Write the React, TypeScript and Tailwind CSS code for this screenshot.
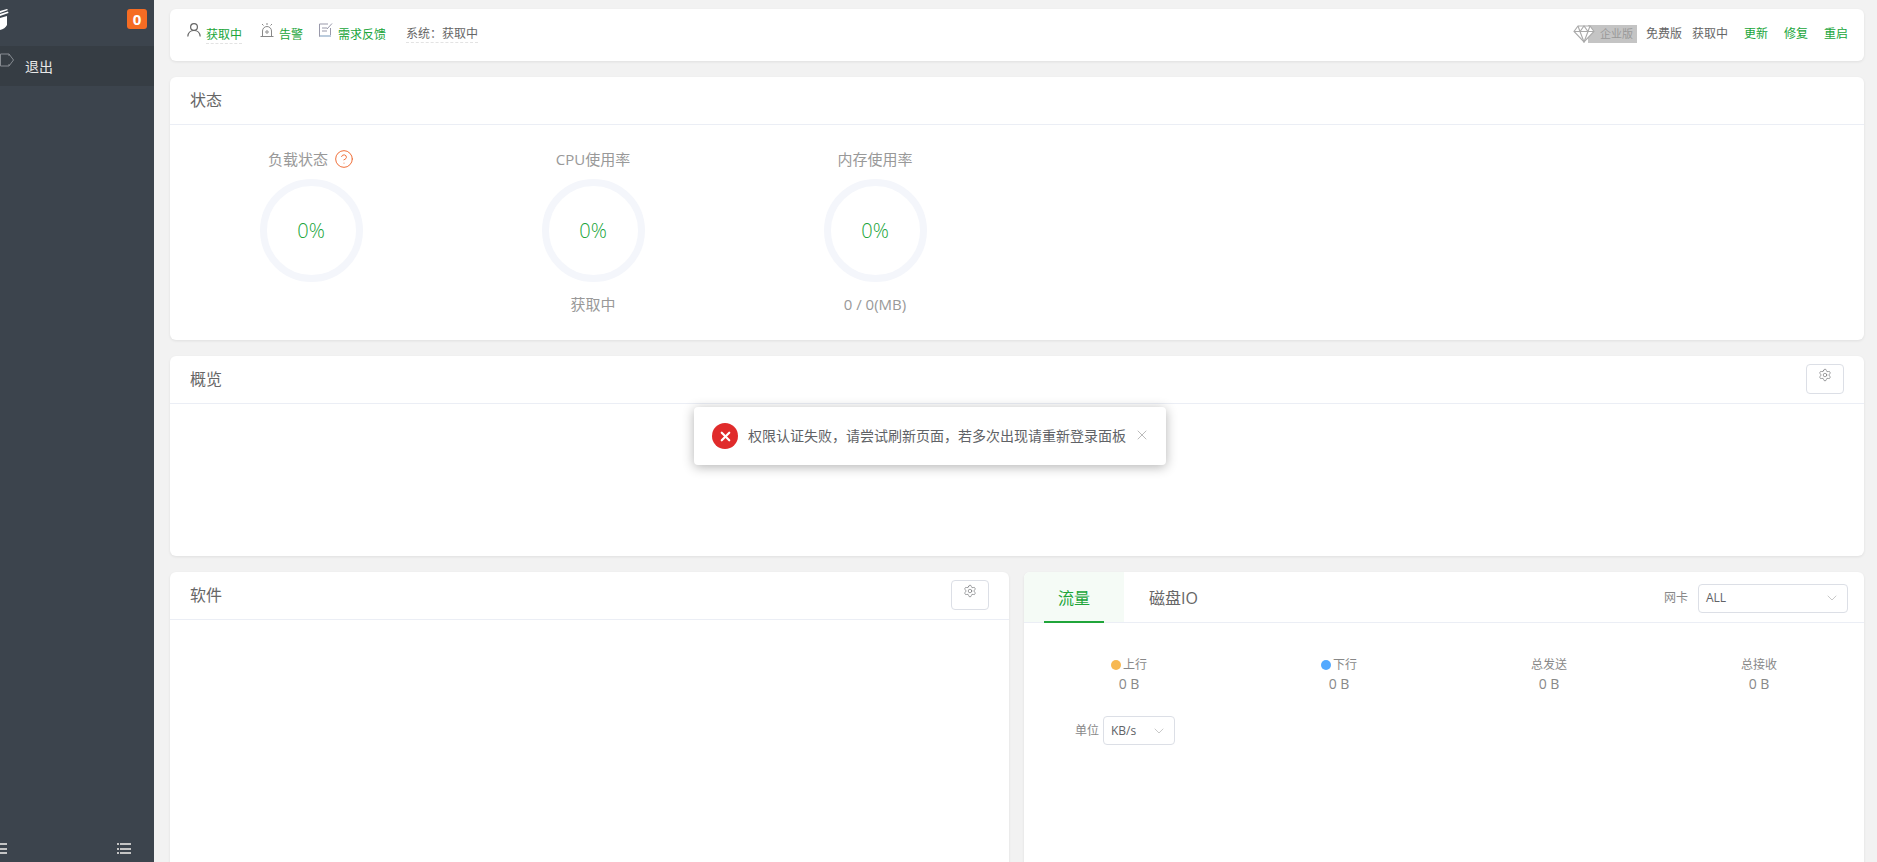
import { ChevronDown, CircleHelp, Settings, X } from 'lucide-react'

const font = "font-['Open_Sans','Noto_Sans_CJK_SC',sans-serif]"

function Card({ title, action, children }: { title: string; action?: React.ReactNode; children?: React.ReactNode }) {
  return (
    <div className="bg-white rounded-[6px] shadow-[0_1px_3px_rgba(0,0,0,0.08)]">
      <div className="h-[48px] border-b border-[#ebeef5] pl-5 pr-5 pb-[2px] flex items-center justify-between text-[16px] text-[#666]">
        <span>{title}</span>
        {action}
      </div>
      {children}
    </div>
  )
}

function GearButton({ className }: { className: string }) {
  return (
    <button className={`h-[30px] border border-[#dcdfe6] rounded-[4px] flex justify-center pt-[3px] text-[#606266] ${className}`}>
      <Settings size={14} strokeWidth={1} />
    </button>
  )
}

function Gauge({ title, foot, help }: { title: string; foot?: string; help?: boolean }) {
  return (
    <div className="w-[282px] flex flex-col items-center">
      <div className="h-[22px] flex items-center gap-[6px] text-[15px] text-[#999]">
        {title}
        {help && <CircleHelp size={20} strokeWidth={1.2} className="text-[#f0703a]" />}
      </div>
      <div className="mt-[9px] w-[103px] h-[103px] rounded-full border-[7px] border-[#f4f6fb] flex items-center justify-center text-[20px] font-[350] text-[#20a53a]">
        0%
      </div>
      <div className="mt-[12px] h-5 leading-5 text-[15px] text-[#999]">{foot}</div>
    </div>
  )
}

function Stat({ label, dot }: { label: string; dot?: string }) {
  return (
    <div className="w-[210px] flex flex-col items-center">
      <div className="h-[18px] flex items-center gap-[2px] text-[12px] text-[#888]">
        {dot && <span className={`w-[10px] h-[10px] rounded-full ${dot}`} />}
        {label}
      </div>
      <div className="mt-px h-[18px] leading-[18px] text-[14px] text-[#888]">0 B</div>
    </div>
  )
}

function Select({ value, className }: { value: string; className: string }) {
  return (
    <div className={`h-[29px] border border-[#dcdfe6] rounded-[4px] bg-white flex items-center justify-between pl-[7px] pr-[7px] text-[12px] text-[#606266] ${className}`}>
      {value}
      <ChevronDown size={16} strokeWidth={0.8} className="text-[#999]" />
    </div>
  )
}

function ListIcon({ className }: { className?: string }) {
  return (
    <svg width="14" height="12" viewBox="0 0 14 12" className={className} fill="#c4c4c4">
      <rect x="0" y="1" width="2" height="2" />
      <rect x="3" y="1" width="11" height="2" />
      <rect x="0" y="6" width="2" height="2" />
      <rect x="3" y="6" width="11" height="2" />
      <rect x="0" y="10" width="2" height="2" />
      <rect x="3" y="10" width="11" height="2" />
    </svg>
  )
}

export default function App() {
  return (
    <div className={`relative h-[862px] flex overflow-hidden bg-[#f2f2f2] ${font}`}>
      <aside className="w-[154px] shrink-0 bg-[#3c444d] flex flex-col">
        <div className="h-[46px] flex justify-between pt-[9px] pr-[7px]">
          <svg width="9" height="22" viewBox="0 0 9 22" fill="#fff">
            <path d="M0 2 L7 0 L8 1 L0 4 Z M0 5 L8 2.5 L8.5 4 L0 7 Z M0 9 L7 7 L7 16 Q5 20 0 21 Z" />
          </svg>
          <span className="w-5 h-5 rounded-[3px] bg-[#f56c23] text-white text-[15px] font-bold flex items-center justify-center">0</span>
        </div>
        <div className="h-10 bg-[#363d44] flex text-[14px] text-[#e8e8e8]">
          <svg width="14" height="14" viewBox="0 0 14 14" fill="none" stroke="#868b91" className="mt-[7px] shrink-0">
            <path d="M9 1 H0.5 V13 H9 M9 1 L13.5 7 L9 13 M9 1 V3 M9 11 V13" />
          </svg>
          <span className="ml-[11px] mt-[11px] leading-5">退出</span>
        </div>
        <div className="mt-auto pb-[8px] pr-[23px] flex justify-between">
          <ListIcon className="-ml-[7px]" />
          <ListIcon />
        </div>
      </aside>

      <main className="flex-1 pl-4 pr-[13px] pt-[9px] flex flex-col gap-4 min-w-0">
        <div className="h-[52px] shrink-0 bg-white rounded-[6px] shadow-[0_1px_3px_rgba(0,0,0,0.08)] pt-[17px] pl-[17px] pr-4 flex justify-between text-[12px] leading-[18px]">
          <div className="flex">
            <svg width="14" height="14" viewBox="0 0 14 14" fill="none" stroke="#666" strokeWidth="1.2" className="-mt-[3px]">
              <circle cx="7" cy="4" r="3.4" />
              <path d="M0.8 13.5 C1.2 9 4 7.5 7 7.5 S12.8 9 13.2 13.5" />
            </svg>
            <span className="ml-[5px] h-[18px] border-b border-dashed border-[#e3e3e3] text-[#20a53a]">获取中</span>
            <svg width="14" height="14" viewBox="0 0 14 14" fill="none" stroke="#888" className="-mt-[3px] ml-[18px]">
              <path d="M0.5 13.5 H13.5 M2.5 13.5 V8 A4.5 4.5 0 0 1 11.5 8 V13.5 M7 0 V2 M2 1 L3.5 2.5 M12 1 L10.5 2.5" />
              <circle cx="7" cy="9" r="1.2" />
            </svg>
            <span className="ml-[5px] text-[#20a53a]">告警</span>
            <svg width="14" height="14" viewBox="0 0 14 14" fill="none" stroke="#99a" className="-mt-[3px] ml-[16px]">
              <path d="M11.5 5 V13.5 H0.5 V1 H9 M3 5 H8 M3 8 H8 M8 6 L13 0.5" />
              <path d="M1 13 H12" stroke="#bcd" strokeWidth="2" />
            </svg>
            <span className="ml-[5px] text-[#20a53a]">需求反馈</span>
            <span className="ml-5 h-[18px] -mt-px border-b border-dashed border-[#e3e3e3] text-[#666]">系统：获取中</span>
          </div>
          <div className="flex -mt-[1px] text-[#666]">
            <div className="relative w-[64px] h-[18px] mr-[9px]">
              <span className="absolute right-0 top-0 w-[49px] h-[18px] bg-[#c4c4c4] text-[#999] text-[11px] pl-[12px]">企业版</span>
              <svg width="22" height="18" viewBox="0 0 22 18" fill="#fff" stroke="#aaa" strokeWidth="1.1" className="absolute left-0 top-0">
                <path d="M5 1 H17 L21 6.5 L11 17 L1 6.5 Z" />
                <path d="M1 6.5 H21 M7 6.5 L11 17 L15 6.5 M5 1 L7 6.5 L11 1 L15 6.5 L17 1" fill="none" />
              </svg>
            </div>
            <span>免费版</span>
            <span className="ml-[10px]">获取中</span>
            <span className="ml-4 text-[#20a53a]">更新</span>
            <span className="ml-4 text-[#20a53a]">修复</span>
            <span className="ml-4 text-[#20a53a]">重启</span>
          </div>
        </div>

        <Card title="状态">
          <div className="pt-[23px] pb-[26px] flex">
            <Gauge title="负载状态" help />
            <Gauge title="CPU使用率" foot="获取中" />
            <Gauge title="内存使用率" foot="0 / 0(MB)" />
          </div>
        </Card>

        <Card title="概览" action={<GearButton className="w-[38px]" />}>
          <div className="h-[152px]" />
        </Card>

        <div className="flex gap-[15px] flex-1 min-h-0">
          <div className="w-[841px] bg-white rounded-t-[6px] shadow-[0_1px_3px_rgba(0,0,0,0.08)] h-[400px]">
            <div className="h-[48px] border-b border-[#ebeef5] pl-5 pr-5 pb-[2px] flex items-center justify-between text-[16px] text-[#666]">
              <span>软件</span>
              <GearButton className="w-[38px]" />
            </div>
          </div>
          <div className="flex-1 bg-white rounded-t-[6px] shadow-[0_1px_3px_rgba(0,0,0,0.08)] h-[400px]">
            <div className="h-[51px] border-b border-[#ebeef5] flex items-center pr-[16px] text-[16px]">
              <div className="relative w-[100px] h-full bg-[#f5fbf6] pt-[2px] flex items-center justify-center text-[#20a53a] rounded-tl-[6px]">
                流量
                <span className="absolute left-[20px] w-[60px] -bottom-px h-[2px] bg-[#20a53a]" />
              </div>
              <span className="ml-[25px] mt-[2px] text-[#666]">磁盘IO</span>
              <span className="ml-auto mt-[2px] text-[12px] text-[#888]">网卡</span>
              <Select value="ALL" className="ml-[10px] mt-[2px] w-[150px]" />
            </div>
            <div className="pt-[33px] flex">
              <Stat label="上行" dot="bg-[#f7b851]" />
              <Stat label="下行" dot="bg-[#52a9ff]" />
              <Stat label="总发送" />
              <Stat label="总接收" />
            </div>
            <div className="mt-[23px] pl-[51px] flex items-center text-[12px] text-[#888]">
              单位
              <Select value="KB/s" className="ml-[4px] w-[72px]" />
            </div>
          </div>
        </div>
      </main>

      <div className="absolute left-[694px] top-[407px] w-[472px] h-[58px] bg-white rounded-[4px] shadow-[0_2px_12px_rgba(0,0,0,0.3)] flex items-center pl-[18px] text-[14px] text-[#606266]">
        <span className="w-[26px] h-[26px] rounded-full bg-[#e02b2b] flex items-center justify-center">
          <X size={15} strokeWidth={3.5} className="text-white" />
        </span>
        <span className="ml-[10px] -mt-[2px] whitespace-nowrap">权限认证失败，请尝试刷新页面，若多次出现请重新登录面板</span>
        <X size={16} strokeWidth={1} className="ml-[8px] -mt-[2px] text-[#999]" />
      </div>
    </div>
  )
}
